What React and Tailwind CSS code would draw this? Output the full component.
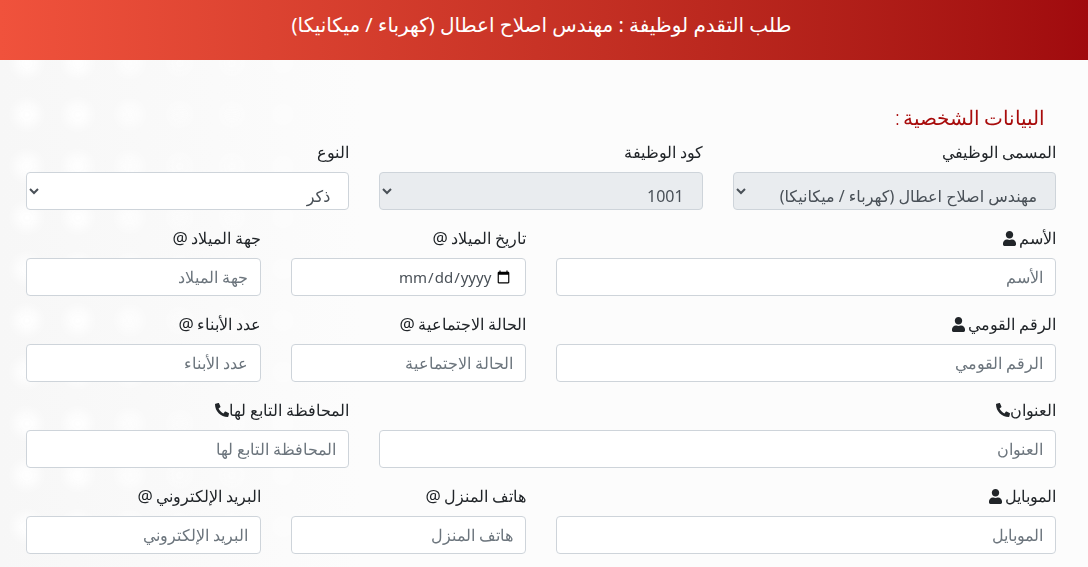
import React from "react";
import { FaUser, FaPhone } from "react-icons/fa";

const font = "font-['Noto_Sans','DejaVu_Sans',sans-serif]";
const inputCls =
  "block w-full h-[38px] rounded-[4px] border border-[#ced4da] bg-white px-3 text-base text-[#495057] placeholder:font-light placeholder:text-[#6c757d] outline-none";
const selectCls = "!pt-[9px] !pb-0 pr-[14px]";

function Label({ text, icon }) {
  return (
    <label className="mb-2 flex h-6 items-center gap-[3px] text-base font-light leading-6 text-[#212529]">
      <span>{text}</span>
      {icon === "user" && <FaUser className="h-[15px] w-[13px]" />}
      {icon === "at" && <span className="text-[17px] font-normal">@</span>}
      {icon === "phone" && <FaPhone className="-mr-[3px] h-[14px] w-[14px] -scale-x-100" />}
    </label>
  );
}

function Field({ span, text, icon }) {
  return (
    <div className={span}>
      <Label text={text} icon={icon} />
      <input type="text" placeholder={text} className={inputCls} />
    </div>
  );
}

function Backdrop() {
  const rows = [63, 114.5, 166, 217.5, 269, 320.5, 372, 423.5, 475, 526.5];
  const cols = [
    [27, 1],
    [78, 1],
    [130, 0.8],
    [180, 0.5],
    [232, 0.5],
    [283, 0.4],
  ];
  return (
    <svg className="pointer-events-none absolute left-0 top-[60px] h-[507px] w-[1088px]" viewBox="0 60 1088 507">
      <defs>
        <filter id="soft" x="-50%" y="-50%" width="200%" height="200%">
          <feGaussianBlur stdDeviation="6" />
        </filter>
        <linearGradient id="fade" x1="0" x2="1" y1="0" y2="0">
          <stop offset="0" stopColor="#f7f7f7" />
          <stop offset="0.4" stopColor="#f9f9f9" />
          <stop offset="1" stopColor="#fcfcfc" />
        </linearGradient>
      </defs>
      <rect x="0" y="60" width="360" height="507" fill="url(#fade)" />
      <g filter="url(#soft)">
        {rows.map((y) =>
          cols.map(([x, o]) => <circle key={`${x}-${y}`} cx={x} cy={y} r="12" fill="#fefefe" opacity={o} />)
        )}
      </g>
    </svg>
  );
}

export default function App() {
  return (
    <div dir="rtl" className={`relative h-[567px] overflow-hidden bg-[#fcfcfc] ${font}`}>
      <Backdrop />
      <header className="relative flex h-[60px] items-center justify-center bg-gradient-to-r from-[#f0523c] to-[#a00a0e] pb-[10px] pr-[5px] text-xl text-white">
        طلب التقدم لوظيفة : مهندس اصلاح اعطال (كهرباء / ميكانيكا)
      </header>
      <main className="relative pl-[26px] pr-8 pt-[42px]">
        <h2 className="mb-[6px] h-8 pr-[11px] text-[19.6px] font-light leading-8 text-[#a80c0c] [word-spacing:-1.5px]">البيانات الشخصية :</h2>
        <div className="grid grid-cols-12 gap-x-[30px] gap-y-4">
          <div className="col-span-4">
            <Label text="المسمى الوظيفي" />
            <select disabled className={`${inputCls} ${selectCls} !bg-[#e9ecef] opacity-100`}>
              <option>مهندس اصلاح اعطال (كهرباء / ميكانيكا)</option>
            </select>
          </div>
          <div className="col-span-4">
            <Label text="كود الوظيفة" />
            <select disabled className={`${inputCls} ${selectCls} !bg-[#e9ecef] opacity-100`}>
              <option>1001</option>
            </select>
          </div>
          <div className="col-span-4">
            <Label text="النوع" />
            <select className={`${inputCls} ${selectCls}`}>
              <option>ذكر</option>
            </select>
          </div>

          <Field span="col-span-6" text="الأسم" icon="user" />
          <div className="col-span-3">
            <Label text="تاريخ الميلاد" icon="at" />
            <input
              type="date"
              className={`${inputCls} text-[15px] [&::-webkit-datetime-edit]:ml-auto [&::-webkit-datetime-edit]:-mr-5 [&::-webkit-datetime-edit]:flex-none [&::-webkit-calendar-picker-indicator]:!m-0`}
            />
          </div>
          <Field span="col-span-3" text="جهة الميلاد" icon="at" />

          <Field span="col-span-6" text="الرقم القومي" icon="user" />
          <Field span="col-span-3" text="الحالة الاجتماعية" icon="at" />
          <Field span="col-span-3" text="عدد الأبناء" icon="at" />

          <Field span="col-span-8" text="العنوان" icon="phone" />
          <Field span="col-span-4" text="المحافظة التابع لها" icon="phone" />

          <Field span="col-span-6" text="الموبايل" icon="user" />
          <Field span="col-span-3" text="هاتف المنزل" icon="at" />
          <Field span="col-span-3" text="البريد الإلكتروني" icon="at" />
        </div>
      </main>
    </div>
  );
}
